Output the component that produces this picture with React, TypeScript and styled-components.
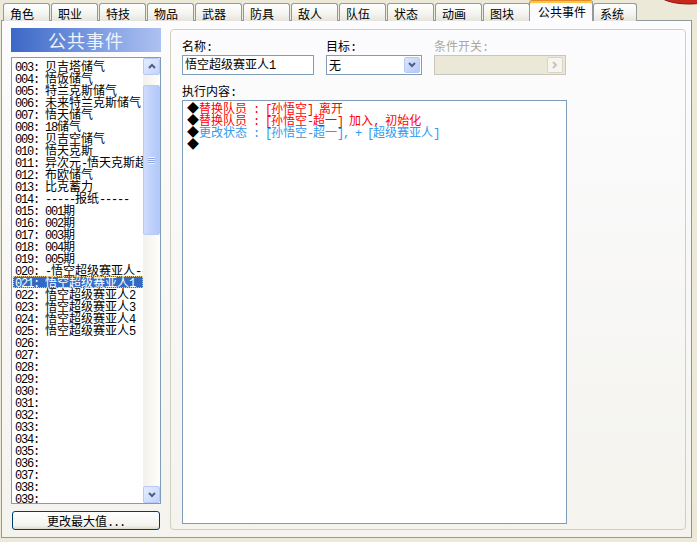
import React from 'react';
import styled, { createGlobalStyle } from 'styled-components';

const GlobalStyle = createGlobalStyle`
  html, body { margin: 0; padding: 0; background: #ece9d8; }
  body {
    font-family: "Noto Sans CJK SC", "Liberation Sans", sans-serif;
    font-size: 12px;
    color: #000;
  }
`;

const Window = styled.div`
  position: relative;
  width: 697px;
  height: 542px;
  background: #ece9d8;
  overflow: hidden;
`;

const CornerBlob = styled.svg`
  position: absolute;
  top: 0;
  right: 0;
`;

// half-width text in SimSun is 6px a character; a narrowed mono face matches that pitch
const Ascii = styled.span`
  font-family: "Liberation Mono", "DejaVu Sans Mono", monospace;
  font-size: 12px;
  letter-spacing: -1.2px;
`;

const mixed = (s: string) =>
  s
    .split(/([\x20-\x7e]+)/)
    .filter(Boolean)
    .map((part, i) =>
      /^[\x20-\x7e]/.test(part) ? <Ascii key={i}>{part}</Ascii> : <React.Fragment key={i}>{part}</React.Fragment>
    );

const TabStrip = styled.div`
  display: flex;
  align-items: flex-end;
  height: 21px;
  padding-left: 3px;
`;

const Tab = styled.div<{ $active?: boolean; $w?: number }>`
  box-sizing: border-box;
  flex: none;
  width: ${p => p.$w ?? 47}px;
  height: ${p => (p.$active ? 21 : 18)}px;
  margin: ${p => (p.$active ? '0 0 0 -2px' : '0 1px 0 0')};
  padding: ${p => (p.$active ? '4px 0 0 8px' : '3px 0 0 6px')};
  border: 1px solid #919b9c;
  border-top-color: ${p => (p.$active ? '#e68b2c' : '#919b9c')};
  border-bottom: none;
  border-radius: 3px 3px 0 0;
  background: ${p => (p.$active ? '#fcfcfe' : 'linear-gradient(#ffffff, #f3f3ef 60%, #e6e4dc)')};
  box-shadow: ${p => (p.$active ? 'inset 0 2px 0 #ffc83c' : 'none')};
  line-height: 13px;
  white-space: nowrap;
  position: ${p => (p.$active ? 'relative' : 'static')};
  z-index: ${p => (p.$active ? 2 : 'auto')};
`;

const Panel = styled.div`
  box-sizing: border-box;
  margin: -1px 5px 0 1px;
  height: 518px;
  border: 1px solid #919b9c;
  border-right-color: #8c9495;
  background: linear-gradient(#fcfcfe, #f4f3ee);
  display: flex;
  align-items: flex-start;
  gap: 9px;
  padding: 7px 0 0 9px;
`;

const LeftCol = styled.div`
  width: 150px;
  display: flex;
  flex-direction: column;
`;

const Banner = styled.div`
  height: 24px;
  line-height: 24px;
  text-align: center;
  font-size: 18px;
  color: #eef3ff;
  letter-spacing: 1px;
  background: linear-gradient(90deg, #3b67c7, #7b9be0 55%, #adc1f1);
  margin-bottom: 5px;
`;

const ListBox = styled.div`
  box-sizing: border-box;
  height: 447px;
  border: 1px solid #7f9db9;
  background: #fff;
  display: flex;
`;

const Rows = styled.div`
  flex: 1;
  min-width: 0;
  padding: 2px 0 0 1px;
`;

const Row = styled.div<{ $sel?: boolean }>`
  height: 12px;
  line-height: 12px;
  padding-left: 2px;
  white-space: nowrap;
  overflow-x: clip;
  overflow-y: visible;
  color: ${p => (p.$sel ? '#fff' : '#000')};
  background: ${p => (p.$sel ? '#316ac5' : 'transparent')};
  outline: ${p => (p.$sel ? '1px dotted #e8c87a' : 'none')};
  outline-offset: -1px;
`;

const ScrollBar = styled.div`
  width: 17px;
  display: flex;
  flex-direction: column;
  background: linear-gradient(90deg, #f3f1ec, #fefefb);
`;

const ScrollBtn = styled.div`
  box-sizing: border-box;
  width: 17px;
  height: 17px;
  border: 1px solid #b7caf5;
  border-radius: 2px;
  background: linear-gradient(135deg, #e5edff, #c3d3fd);
  display: flex;
  align-items: center;
  justify-content: center;
`;

const Track = styled.div`
  flex: 1;
  display: flex;
  flex-direction: column;
`;

const Thumb = styled.div`
  box-sizing: border-box;
  margin-top: 10px;
  height: 150px;
  border: 1px solid #b7caf5;
  border-radius: 2px;
  background: linear-gradient(90deg, #cfdcfd, #bccffb 60%, #b3c8f7);
  display: flex;
  align-items: center;
  justify-content: center;
`;

const Grip = styled.div`
  width: 7px;
  height: 7px;
  background: repeating-linear-gradient(#eef3ff 0 1px, #8da6e0 1px 2px);
`;

const WideButton = styled.div`
  box-sizing: border-box;
  margin: 7px 1px 0 1px;
  height: 19px;
  border: 1px solid #003c74;
  border-radius: 3px;
  background: linear-gradient(#ffffff, #f3f3ee 80%, #dcd8cc);
  text-align: center;
  line-height: 17px;
`;

const GroupBox = styled.div`
  box-sizing: border-box;
  margin-top: 1px;
  width: 516px;
  height: 501px;
  border: 1px solid #d0d0bf;
  border-radius: 4px;
  padding: 10px 0 0 11px;
`;

const FieldRow = styled.div`
  display: flex;
  gap: 12px;
`;

const Field = styled.div`
  display: flex;
  flex-direction: column;
`;

const Label = styled.div<{ $disabled?: boolean }>`
  height: 12px;
  line-height: 12px;
  margin-bottom: 3px;
  color: ${p => (p.$disabled ? '#aca899' : '#000')};
`;

const TextBox = styled.div<{ $w: number }>`
  box-sizing: border-box;
  width: ${p => p.$w}px;
  height: 20px;
  border: 1px solid #7f9db9;
  background: #fff;
  padding: 0 0 0 2px;
  line-height: 18px;
  display: flex;
  align-items: center;
  justify-content: space-between;
`;

const DisabledBox = styled.div`
  box-sizing: border-box;
  width: 132px;
  height: 20px;
  border: 1px solid #c9c7ba;
  background: #ebe8d7;
  display: flex;
  justify-content: flex-end;
  align-items: center;
  padding-right: 1px;
`;

const DropBtn = styled.div<{ $disabled?: boolean }>`
  box-sizing: border-box;
  width: 16px;
  height: 16px;
  margin-right: 1px;
  border: 1px solid ${p => (p.$disabled ? '#d8d5c8' : '#b9c9f3')};
  border-radius: 2px;
  background: ${p => (p.$disabled ? '#f6f5f0' : 'linear-gradient(135deg, #dce6fd, #b6c9f6)')};
  display: flex;
  align-items: center;
  justify-content: center;
`;

const ContentLabel = styled(Label)`
  margin-top: 10px;
`;

const Script = styled.div`
  box-sizing: border-box;
  width: 385px;
  height: 424px;
  border: 1px solid #7f9db9;
  background: #fff;
  padding: 1px 0 0 4px;
`;

const Line = styled.div<{ $tone?: 'red' | 'blue' }>`
  height: 12px;
  line-height: 12px;
  white-space: nowrap;
  color: ${p => (p.$tone === 'red' ? '#ff0000' : p.$tone === 'blue' ? '#3399ee' : '#000')};
`;

const Bullet = styled.span`
  color: #000;
`;

const tabs = ['角色', '职业', '特技', '物品', '武器', '防具', '敌人', '队伍', '状态', '动画', '图块'];

const names: Record<number, string> = {
  3: '贝吉塔储气',
  4: '悟饭储气',
  5: '特兰克斯储气',
  6: '未来特兰克斯储气',
  7: '悟天储气',
  8: '18储气',
  9: '贝吉空储气',
  10: '悟天克斯',
  11: '异次元-悟天克斯超',
  12: '布欧储气',
  13: '比克蓄力',
  14: '-----报纸-----',
  15: '001期',
  16: '002期',
  17: '003期',
  18: '004期',
  19: '005期',
  20: '-悟空超级赛亚人--',
  21: '悟空超级赛亚人1',
  22: '悟空超级赛亚人2',
  23: '悟空超级赛亚人3',
  24: '悟空超级赛亚人4',
  25: '悟空超级赛亚人5',
};

const rows = Array.from({ length: 37 }, (_, i) => i + 3);

const script: { tone?: 'red' | 'blue'; text: string }[] = [
  { tone: 'red', text: '替换队员 : [孙悟空] 离开' },
  { tone: 'red', text: '替换队员 : [孙悟空-超一] 加入, 初始化' },
  { tone: 'blue', text: '更改状态 : [孙悟空-超一], + [超级赛亚人]' },
  { text: '' },
];

const Chevron = ({ dir, color = '#4d6185' }: { dir: 'up' | 'down' | 'right'; color?: string }) => {
  const d = dir === 'up' ? 'M1 5 L4 2 L7 5' : dir === 'down' ? 'M1 2 L4 5 L7 2' : 'M2 1 L5 4 L2 7';
  return (
    <svg width="8" height="8" viewBox="0 0 8 8">
      <path d={d} fill="none" stroke={color} strokeWidth="2" />
    </svg>
  );
};

const App: React.FC = () => {
  return (
    <Window>
      <GlobalStyle />
      <CornerBlob width="40" height="6" viewBox="0 0 40 6">
        <ellipse cx="32" cy="-6" rx="30" ry="10" fill="#c8281c" stroke="#7a1a10" strokeWidth="1" />
      </CornerBlob>
      <TabStrip>
        {tabs.map(t => (
          <Tab key={t}>{t}</Tab>
        ))}
        <Tab $active $w={64}>公共事件</Tab>
        <Tab $w={44}>系统</Tab>
      </TabStrip>
      <Panel>
        <LeftCol>
          <Banner>公共事件</Banner>
          <ListBox>
            <Rows>
              {rows.map(n => {
                const num = String(n).padStart(3, '0');
                const name = names[n];
                return (
                  <Row key={n} $sel={n === 21}>
                    {mixed(name ? `${num}: ${name}` : `${num}:`)}
                  </Row>
                );
              })}
            </Rows>
            <ScrollBar>
              <ScrollBtn>
                <Chevron dir="up" />
              </ScrollBtn>
              <Track>
                <Thumb>
                  <Grip />
                </Thumb>
              </Track>
              <ScrollBtn>
                <Chevron dir="down" />
              </ScrollBtn>
            </ScrollBar>
          </ListBox>
          <WideButton>{mixed('更改最大值...')}</WideButton>
        </LeftCol>
        <GroupBox>
          <FieldRow>
            <Field>
              <Label>{mixed('名称:')}</Label>
              <TextBox $w={132}>
                <span>{mixed('悟空超级赛亚人1')}</span>
              </TextBox>
            </Field>
            <Field>
              <Label>{mixed('目标:')}</Label>
              <TextBox $w={96}>
                无
                <DropBtn>
                  <Chevron dir="down" />
                </DropBtn>
              </TextBox>
            </Field>
            <Field>
              <Label $disabled>{mixed('条件开关:')}</Label>
              <DisabledBox>
                <DropBtn $disabled>
                  <Chevron dir="right" color="#c9c7ba" />
                </DropBtn>
              </DisabledBox>
            </Field>
          </FieldRow>
          <ContentLabel>{mixed('执行内容:')}</ContentLabel>
          <Script>
            {script.map((l, i) => (
              <Line key={i} $tone={l.tone}>
                <Bullet>◆</Bullet>
                {mixed(l.text)}
              </Line>
            ))}
          </Script>
        </GroupBox>
      </Panel>
    </Window>
  );
};

export default App;
